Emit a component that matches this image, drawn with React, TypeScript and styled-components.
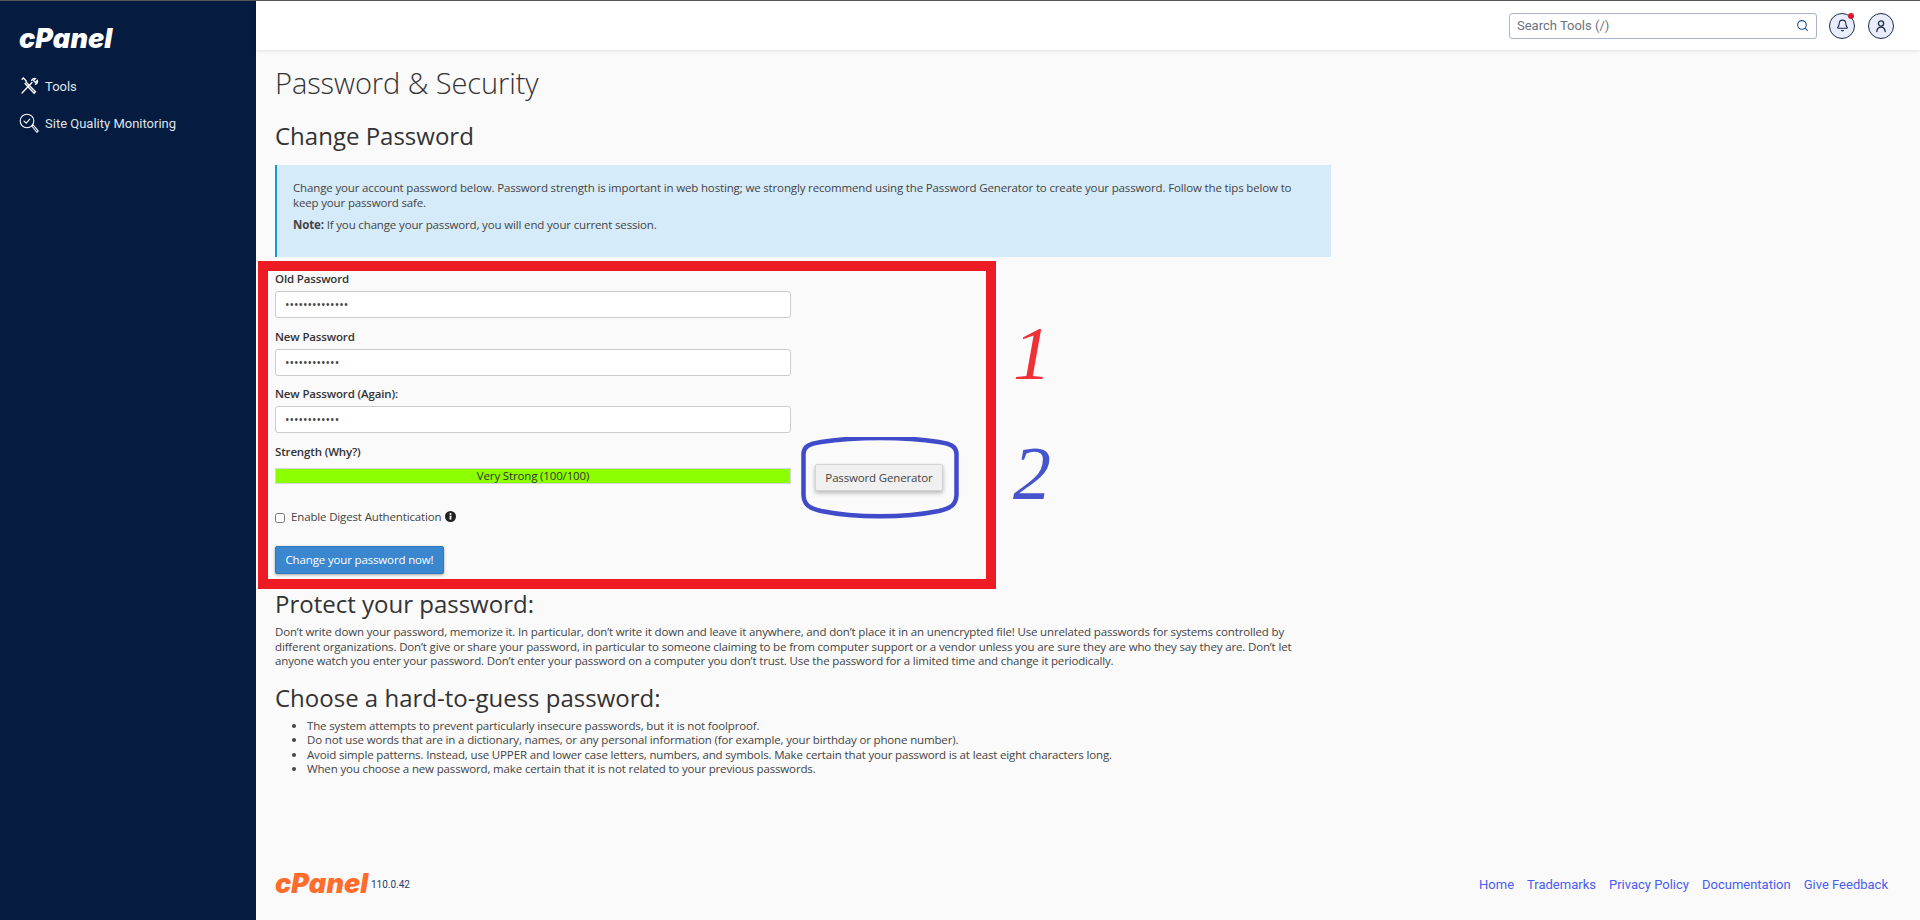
import React from "react";
import styled, { createGlobalStyle } from "styled-components";
import { Search, Bell } from "lucide-react";

const Global = createGlobalStyle`
  html, body { margin: 0; padding: 0; height: 100%; background: #fafafa; }
  * { box-sizing: border-box; }
  #root { height: 920px; }
`;

const Page = styled.div`
  height: 920px; width: 1920px; display: flex; overflow: hidden; position: relative;
  border-top: 1px solid #555; font-family: "Open Sans", sans-serif; color: #333;
`;
const Sidebar = styled.aside`
  width: 256px; flex: none; background: #051b3f; padding: 26px 0 0 19px; color: #dfe4ec;
  font-family: Roboto, sans-serif; font-size: 13px;
`;
const Logo = styled.span<{ $orange?: boolean }>`
  display: block; width: 95px; height: 24px; line-height: 24px; white-space: nowrap;
  font-family: Inter, sans-serif; font-weight: 900; font-style: italic; font-size: 27px; letter-spacing: 0.1px;
  color: ${(p) => (p.$orange ? "#ff6c2c" : "#fff")};
  flex: none;
`;
const Nav = styled.nav`
  margin-top: 26px; display: flex; flex-direction: column; gap: 19px;
`;
const NavItem = styled.a`
  display: flex; align-items: center; gap: 6px; height: 18px; white-space: nowrap;
`;
const Main = styled.div`
  flex: 1; display: flex; flex-direction: column; min-width: 0;
`;
const Header = styled.header`
  height: 49px; flex: none; background: #fff; box-shadow: 0 1px 3px rgba(0,0,0,.1);
  display: flex; align-items: center; justify-content: flex-end; padding-right: 26px; gap: 13px;
`;
const SearchBox = styled.div`
  width: 308px; height: 26px; border: 1px solid #a9b5cc; border-radius: 3px; display: flex; align-items: center;
  justify-content: space-between; padding: 0 7px; color: #6b7280; margin-right: -1px;
  font-family: Roboto, sans-serif; font-size: 13px; background: #fff;
`;
const RoundBtn = styled.div`
  width: 26px; height: 26px; border-radius: 50%; border: 1px solid #1b2a4e; background: #e9edfb; color: #1b2a4e;
  display: flex; align-items: center; justify-content: center; position: relative;
`;
const Dot = styled.span`
  position: absolute; top: -1px; right: 0; width: 6px; height: 6px; border-radius: 50%; background: #d9172c;
`;
const Content = styled.main`
  flex: 1; padding: 0 0 0 19px; display: flex; flex-direction: column; position: relative; min-height: 0;
`;
const Column = styled.div`
  width: 1056px;
`;
const Title = styled.h1`
  margin: 15px 0 0; font-size: 29px; letter-spacing: -0.08px; font-weight: 300; line-height: 36px; color: #333;
`;
const Subtitle = styled.h2`
  margin: 20px 0 0; font-size: 24px; font-weight: 400; line-height: 30px; color: #333;
`;
const Info = styled.div`
  margin: 14px 0 0; height: 92px; background: #d6ebf9; border-left: 2px solid #1a96d4; padding: 16px;
  font-size: 11.5px; letter-spacing: -0.15px; line-height: 14.6px; color: #444;
  p { margin: 0 0 7.4px; }
`;
const FormSection = styled.form`
  position: relative; margin-top: 4px; height: 328px; display: flex; gap: 24px; padding-top: 9px;
`;
const Fields = styled.div`
  width: 516px; display: flex; flex-direction: column;
`;
const Label = styled.label`
  display: block; font-size: 11.5px; letter-spacing: -0.15px; font-weight: 600; line-height: 17px; color: #333;
`;
const Input = styled.input`
  display: block; width: 100%; height: 27px; margin: 4px 0 9.6px; border: 1px solid #ccc; border-radius: 3px; background: #fff;
  padding: 0 9px; font-size: 12px; font-family: "Open Sans", sans-serif; color: #444; outline: none; flex: none;
`;
const Bar = styled.div`
  height: 16px; margin-top: 8px; background: #8cff00; border: 1px solid #d6d6d6; font-size: 11.5px; letter-spacing: -0.15px; line-height: 14px; text-align: center; color: #333; flex: none;
`;
const CheckRow = styled.div`
  display: flex; align-items: center; margin-top: 24px; font-size: 11.5px; letter-spacing: -0.15px; color: #444; height: 18px; flex: none;
`;
const Check = styled.input`
  width: 10px; height: 10px; margin: 2px 6px 0 0;
`;
const InfoIcon = styled.svg`
  margin-left: 4px; width: 11px; height: 11px;
`;
const Submit = styled.button`
  margin-top: 20px; width: 169px; height: 28px; padding: 0; white-space: nowrap; background: #3a87cf; border: 1px solid #2f78bd; border-radius: 2px; color: #fff;
  font-family: "Open Sans", sans-serif; font-size: 11.5px; letter-spacing: -0.15px; box-shadow: 0 1px 3px rgba(0,0,0,.35); flex: none;
`;
const Gen = styled.button`
  align-self: flex-start; margin-top: 194px; width: 128px; height: 27px; padding: 0; white-space: nowrap; background: #f0f0f0; border: 1px solid #d4d4d4; border-radius: 2px;
  font-family: "Open Sans", sans-serif; font-size: 11.5px; letter-spacing: -0.15px; color: #444; box-shadow: 0 2px 4px rgba(0,0,0,.28);
`;
const RedBox = styled.div`
  position: absolute; left: -17px; top: 0; width: 738px; height: 328px; border: 10px solid #ed1c24; pointer-events: none;
`;
const Ellipse = styled.svg`
  position: absolute; left: 526px; top: 176px; width: 158px; height: 82px; pointer-events: none;
`;
const Mark = styled.span<{ $blue?: boolean }>`
  position: absolute; left: 738px; top: ${(p) => (p.$blue ? "170px" : "50px")};
  font-family: "Liberation Serif", serif; font-style: italic; font-size: 76px; line-height: 84px;
  color: ${(p) => (p.$blue ? "#4655cc" : "#ee3039")};
`;
const H3 = styled.h3<{ $gap: number }>`
  margin: ${(p) => p.$gap}px 0 0; font-size: 24px; font-weight: 400; line-height: 30px; color: #333;
`;
const Body = styled.p`
  margin: 6px 0 0; font-size: 11.5px; letter-spacing: -0.15px; line-height: 14.6px; color: #444;
`;
const List = styled.ul`
  margin: 6px 0 0; padding-left: 32px; font-size: 11.5px; letter-spacing: -0.15px; line-height: 14.4px; color: #444;
`;
const Footer = styled.footer`
  position: absolute; left: 19px; right: 32px; bottom: 24px; display: flex; align-items: center; justify-content: space-between;
  font-family: Roboto, sans-serif;
`;
const Brand = styled.div`
  display: flex; align-items: center; gap: 1px; font-size: 10px; color: #1d3a6e;
`;
const Links = styled.div`
  display: flex; gap: 13px; font-size: 13px; color: #4a5cf2;
`;

const ToolsIcon = () => (
  <svg width="20" height="20" viewBox="0 0 20 20" fill="none" stroke="#fff" strokeWidth="1.3" strokeLinecap="round">
    <path d="M3 17 13 6.5M12.6 4.5c.7-1.6 2.4-2.4 3.9-1.9l-2 2 1.8 1.8 2-2c.5 1.5-.3 3.2-1.9 3.9" />
    <path d="M3 3.2 4.4 2l3 3.2M7 6l9.5 9.8-1.4 1.4L6 7.5" />
  </svg>
);
const QualityIcon = () => (
  <svg width="20" height="20" viewBox="0 0 20 20" fill="none" stroke="#fff" strokeWidth="1.1" strokeLinecap="round" strokeLinejoin="round">
    <circle cx="8" cy="8" r="6.8" />
    <path d="m5 8.2 2.2 2 3.6-4" />
    <path d="m12.8 13 1.4-1 4.8 5.6c.5.6-.7 1.9-1.4 1.4z" />
  </svg>
);
const UserIcon = () => (
  <svg width="14" height="14" viewBox="0 0 14 14" fill="none" stroke="#1b2a4e" strokeWidth="1.3" strokeLinecap="round">
    <circle cx="7" cy="4.5" r="2.6" />
    <path d="M2.8 12.5c.3-3 2-4.4 4.2-4.4s3.9 1.4 4.2 4.4" />
  </svg>
);

export default function App() {
  return (
    <Page>
      <Global />
      <Sidebar>
        <Logo>cPanel</Logo>
        <Nav>
          <NavItem><ToolsIcon />Tools</NavItem>
          <NavItem><QualityIcon />Site Quality Monitoring</NavItem>
        </Nav>
      </Sidebar>
      <Main>
        <Header>
          <SearchBox>
            <span>Search Tools (/)</span>
            <Search size={13} color="#1f4e8c" />
          </SearchBox>
          <RoundBtn><Bell size={13} /><Dot /></RoundBtn>
          <RoundBtn><UserIcon /></RoundBtn>
        </Header>
        <Content>
          <Column>
            <Title>Password &amp; Security</Title>
            <Subtitle>Change Password</Subtitle>
            <Info>
              <p>Change your account password below. Password strength is important in web hosting; we strongly recommend using the Password Generator to create your password. Follow the tips below to keep your password safe.</p>
              <p><b>Note:</b> If you change your password, you will end your current session.</p>
            </Info>
            <FormSection>
              <Fields>
                <Label>Old Password</Label>
                <Input type="password" readOnly value="12345678901234" />
                <Label>New Password</Label>
                <Input type="password" readOnly value="123456789012" />
                <Label>New Password (Again):</Label>
                <Input type="password" readOnly value="123456789012" />
                <Label>Strength (Why?)</Label>
                <Bar>Very Strong (100/100)</Bar>
                <CheckRow>
                  <Check type="checkbox" />Enable Digest Authentication
                  <InfoIcon viewBox="0 0 11 11">
                    <circle cx="5.5" cy="5.5" r="5.5" fill="#222" />
                    <circle cx="5.5" cy="3" r="1" fill="#fff" />
                    <rect x="4.6" y="4.6" width="1.8" height="4" fill="#fff" />
                  </InfoIcon>
                </CheckRow>
                <Submit type="button">Change your password now!</Submit>
              </Fields>
              <Gen type="button">Password Generator</Gen>
              <RedBox />
              <Ellipse viewBox="0 0 158 82" fill="none">
                <path d="M2.5 17C3 9 8 7 20 5 55-.5 103-.5 138 5 150 7 155 9 155.5 17V58C155 68 150 71 138 74 103 81 55 81 20 74 8 71 3 68 2.5 58Z" stroke="#3f4bc8" strokeWidth="4.5" />
              </Ellipse>
              <Mark>1</Mark>
              <Mark $blue>2</Mark>
            </FormSection>
            <H3 $gap={0}>Protect your password:</H3>
            <Body>Don’t write down your password, memorize it. In particular, don’t write it down and leave it anywhere, and don’t place it in an unencrypted file! Use unrelated passwords for systems controlled by different organizations. Don’t give or share your password, in particular to someone claiming to be from computer support or a vendor unless you are sure they are who they say they are. Don’t let anyone watch you enter your password. Don’t enter your password on a computer you don’t trust. Use the password for a limited time and change it periodically.</Body>
            <H3 $gap={14}>Choose a hard-to-guess password:</H3>
            <List>
              <li>The system attempts to prevent particularly insecure passwords, but it is not foolproof.</li>
              <li>Do not use words that are in a dictionary, names, or any personal information (for example, your birthday or phone number).</li>
              <li>Avoid simple patterns. Instead, use UPPER and lower case letters, numbers, and symbols. Make certain that your password is at least eight characters long.</li>
              <li>When you choose a new password, make certain that it is not related to your previous passwords.</li>
            </List>
          </Column>
          <Footer>
            <Brand><Logo $orange>cPanel</Logo>110.0.42</Brand>
            <Links>
              <span>Home</span><span>Trademarks</span><span>Privacy Policy</span><span>Documentation</span><span>Give Feedback</span>
            </Links>
          </Footer>
        </Content>
      </Main>
    </Page>
  );
}
